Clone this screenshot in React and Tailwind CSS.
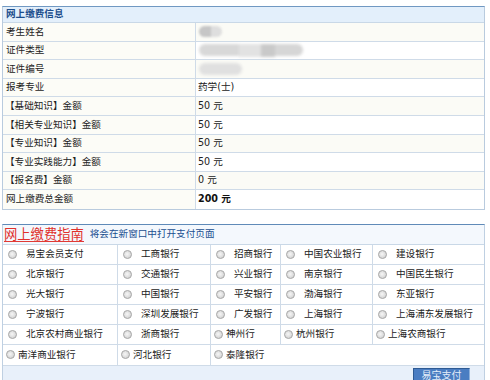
import React from "react";

const FONT = { fontFamily: '"DejaVu Sans", "Noto Sans CJK SC", sans-serif' };

function Radio() {
  return (
    <svg width="9" height="9" viewBox="0 0 9 9" className="shrink-0">
      <defs>
        <radialGradient id="rg" cx="0.45" cy="0.45" r="0.6">
          <stop offset="0" stopColor="#f6f6f6" />
          <stop offset="1" stopColor="#cfcfcf" />
        </radialGradient>
      </defs>
      <circle cx="4.5" cy="4.5" r="4" fill="url(#rg)" stroke="#a9a9a9" strokeWidth="1" />
    </svg>
  );
}

const info = [
  ["考生姓名", "blob1"],
  ["证件类型", "blob2"],
  ["证件编号", "blob3"],
  ["报考专业", "药学(士)"],
  ["【基础知识】金额", "50 元"],
  ["【相关专业知识】金额", "50 元"],
  ["【专业知识】金额", "50 元"],
  ["【专业实践能力】金额", "50 元"],
  ["【报名费】金额", "0 元"],
  ["网上缴费总金额", "200 元", true],
];

const banks = [
  { t: "w", items: ["易宝会员支付", "工商银行", "招商银行", "中国农业银行", "建设银行"] },
  { t: "w", items: ["北京银行", "交通银行", "兴业银行", "南京银行", "中国民生银行"] },
  { t: "w", items: ["光大银行", "中国银行", "平安银行", "渤海银行", "东亚银行"] },
  { t: "w", items: ["宁波银行", "深圳发展银行", "广发银行", "上海银行", "上海浦东发展银行"] },
  { t: "m", items: ["北京农村商业银行", "浙商银行", "神州行", "杭州银行", "上海农商银行"] },
  { t: "s", items: ["南洋商业银行", "河北银行", "泰隆银行"] },
];

function Value({ v, bold }) {
  if (v === "blob1")
    return (
      <div className="ml-[1px] flex h-[11px] w-[23px] overflow-hidden rounded-full blur-[1px]">
        <div className="h-full w-[12px] bg-[#c6c6c6]" />
        <div className="h-full w-[11px] bg-[#dedede]" />
      </div>
    );
  if (v === "blob2")
    return (
      <div className="ml-[1px] flex h-[13px] items-center blur-[1.5px]">
        <div className="h-[12px] w-[40px] rounded-l-full bg-[#d8d8d8]" />
        <div className="h-[13px] w-[22px] bg-[#e2e2e2]" />
        <div className="h-[13px] w-[14px] bg-[#c9c9c9]" />
        <div className="h-[12px] w-[28px] rounded-r-full bg-[#d6d6d6]" />
      </div>
    );
  if (v === "blob3")
    return <div className="ml-[1px] h-[12px] w-[43px] rounded-full bg-[#e0e0e0] blur-[1.5px]" />;
  return <span className={bold ? "font-bold text-[#111]" : ""}>{v}</span>;
}

export default function App() {
  return (
    <div className="h-[380px] w-[490px] overflow-hidden bg-white text-[9.6px] text-[#222]" style={FONT}>
      <div className="pl-[2px] pt-[6px]">
        {/* info table */}
        <div className="w-[483px] border border-[#b9cbde] border-t-[#7098c2]">
          <div className="flex h-[16px] items-center border-b border-[#c9d8e7] bg-[#e3effb] pl-[3px] font-bold text-[#1b4d8c]">
            网上缴费信息
          </div>
          {info.map(([k, v, bold], i) => (
            <div key={i} className="grid h-[18.6px] grid-cols-[193px_1fr] border-b border-[#cfdbe8] last:border-b-0">
              <div
                className={
                  "flex items-center border-r border-[#cfdbe8] bg-[#fcfcf7] " +
                  (k.startsWith("【") ? "pl-[2px]" : "pl-[3px]")
                }
              >
                {k}
              </div>
              <div className={"flex items-center pl-[2px] " + (i % 2 === 0 ? "bg-[#fbfbf6]" : "bg-white")}>
                <Value v={v} bold={bold} />
              </div>
            </div>
          ))}
        </div>

        {/* payment guide */}
        <div className="mt-[14px] w-[483px] border border-[#bfd0e2] border-t-[#5f8ab8]">
          <div className="flex h-[20px] items-center border-b border-[#c9d8e7] bg-[#f4f8fd] pl-[1px]">
            <span
              className="border-b border-[#e03a35] text-[13.3px] leading-[15px] text-[#e0312c]"
              style={{ fontFamily: '"Noto Sans CJK SC", sans-serif' }}
            >
              网上缴费指南
            </span>
            <span className="ml-[6px] text-[#1a4f90]">将会在新窗口中打开支付页面</span>
          </div>
          {banks.map((row, ri) => (
            <div
              key={ri}
              className={
                "grid grid-cols-[115px_93px_70px_92px_1fr] border-b border-[#cfdbe8] " +
                (ri === 5 ? "h-[21px]" : "h-[20px]")
              }
            >
              {row.items.map((b, ci) => {
                const tight = row.t === "s" || (row.t === "m" && ci >= 2);
                const last = ri === 5 && ci === 2;
                return (
                  <div
                    key={ci}
                    className={
                      "flex items-center bg-white " +
                      (tight ? "gap-[3px] pl-[3px] " : "gap-[9px] pl-[5px] ") +
                      (last ? "col-span-3" : ci < 4 ? "border-r border-[#cfdbe8]" : "")
                    }
                  >
                    <Radio />
                    <span>{b}</span>
                  </div>
                );
              })}
            </div>
          ))}
          <div className="flex h-[30px] items-start justify-end bg-[#e8f0fa] pr-[14px] pt-[2px]">
            <button
              className="flex h-[13px] w-[57px] items-start justify-center border border-[#2e5a93] border-r-[#8fb1dc] border-b-0 bg-[#4a7dc2] text-[10px] leading-[12px] text-[#e4edf9]"
              style={{ fontFamily: '"Noto Sans CJK SC", sans-serif' }}
            >
              易宝支付
            </button>
          </div>
        </div>
      </div>
    </div>
  );
}
